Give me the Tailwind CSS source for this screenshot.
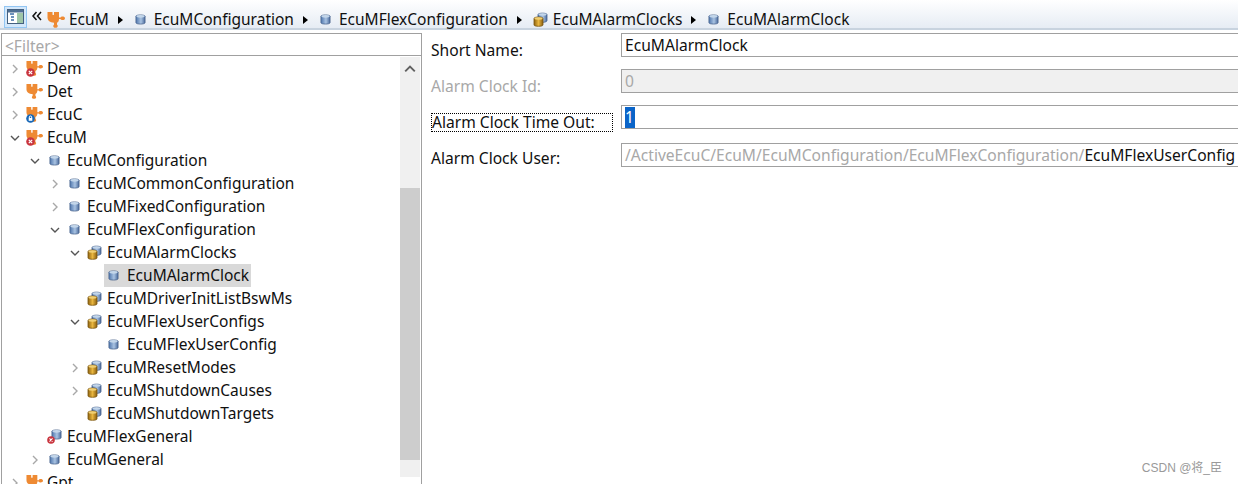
<!DOCTYPE html>
<html lang="en">
<head>
<meta charset="UTF-8">
<title>EcuMAlarmClock</title>
<script src="https://cdn.jsdelivr.net/npm/@tailwindcss/browser@4"></script>
</head>
<body class="bg-white">
<svg class="absolute w-0 h-0">
  <defs>
    <linearGradient id="blue" x1="0" y1="0" x2="1" y2="0"><stop offset="0" stop-color="#4f76ad"/><stop offset=".55" stop-color="#a9c3e2"/><stop offset="1" stop-color="#4a6a9c"/></linearGradient>
    <linearGradient id="gold" x1="0" y1="0" x2="1" y2="0"><stop offset="0" stop-color="#8f6410"/><stop offset=".5" stop-color="#e9b63f"/><stop offset="1" stop-color="#8a5f10"/></linearGradient>
  </defs>
  <symbol id="plugin" viewBox="0 0 18 18">
    <path d="M.5 1h5v2.500c0 .8 1.500 .8 1.500 0V1h5v5.500h1.500c.4-1.600 4.500-1.600 4.500.7s-4.100 2.300-4.500.7H12c0 2-.8 3.300-2 3.800v2c1.300.8 1 3-1.500 3s-2.800-2.200-1.500-3v-2C3 11.500.5 9.500.5 6.500z" fill="#ee8a33"/>
  </symbol>
  <symbol id="cyl" viewBox="0 0 12 12">
    <path d="M1 2.500C1 .5 11 .5 11 2.500v7c0 2-10 2-10 0z" fill="url(#blue)" stroke="#47618a" stroke-width=".8"/>
    <ellipse cx="6" cy="2.500" rx="4.500" ry="1.500" fill="#c3d6ea"/>
  </symbol>
  <symbol id="stack" viewBox="0 0 15 15">
    <path d="M5 2.500C5 .7 14 .7 14 2.500v6c0 1.500-3 1.800-4 1.800H5z" fill="url(#blue)" stroke="#47618a" stroke-width=".8"/>
    <ellipse cx="9.500" cy="2.500" rx="4" ry="1.200" fill="#c3d6ea"/>
    <path d="M1 6.500C1 4.500 10 4.500 10 6.500v6.500c0 1.700-9 1.700-9 0z" fill="url(#gold)" stroke="#7a5510" stroke-width=".8"/>
    <ellipse cx="5.500" cy="6.500" rx="4" ry="1.200" fill="#f0cf73"/>
  </symbol>
  <symbol id="err" viewBox="0 0 9 9">
    <circle cx="4.500" cy="4.500" r="4.300" fill="#c9353f"/>
    <path d="M2.800 2.800l3.400 3.400M6.200 2.800L2.800 6.200" stroke="#fff" stroke-width="1.200"/>
  </symbol>
  <symbol id="info" viewBox="0 0 9 9">
    <circle cx="4.500" cy="4.500" r="4.300" fill="#1667b7"/>
    <rect x="2.700" y="4" width="3.600" height="2.800" fill="#fff"/>
    <path d="M3.300 4V3c0-1.300 2.400-1.300 2.400 0v1" fill="none" stroke="#fff"/>
  </symbol>
  <symbol id="open" viewBox="0 0 10 10"><path d="M1 3l4 4 4-4" fill="none" stroke="#555" stroke-width="1.400"/></symbol>
  <symbol id="closed" viewBox="0 0 10 10"><path d="M3 1l4 4-4 4" fill="none" stroke="#a8a8a8" stroke-width="1.400"/></symbol>
</svg>

<div class="relative w-[1238px] h-[484px] overflow-hidden text-[15.5px] text-[#101010] font-['Noto_Sans','Open_Sans',sans-serif]">
  <!-- breadcrumb -->
  <div class="h-[30px] pt-[11px] flex items-center bg-gradient-to-b from-white to-[#e6ecf4] border-b-2 border-[#c8d3df]">
    <div class="ml-1 mt-[-6px] w-[23px] h-[22px] flex items-center justify-center bg-[#d3e7fa] border border-[#93c6f3]">
      <svg width="17" height="15" viewBox="0 0 17 15"><rect x=".5" y=".5" width="16" height="14" fill="#fff" stroke="#44607f"/><rect x="1" y="1" width="15" height="2.500" fill="#4f6f94"/><rect x="10" y="4" width="6" height="10" fill="#9fc6a8"/><path d="M3 5h4M4 8h3M4 11h3" stroke="#3e6ea8" stroke-width="1.500"/></svg>
    </div>
    <svg class="ml-[5px] mt-[-7px]" width="10" height="10" viewBox="0 0 10 10"><path d="M4.500 1L1 5l3.500 4M9 1L5.500 5 9 9" fill="none" stroke="#111" stroke-width="1.500"/></svg>
    <svg class="ml-[5px]" width="18" height="18"><use href="#plugin"/></svg>
    <span class="ml-[4px]">EcuM</span>
    <span class="ml-[9px] w-0 h-0 border-y-[4px] border-y-transparent border-l-[5px] border-l-black"></span>
    <svg class="ml-[12px]" width="11" height="11"><use href="#cyl"/></svg>
    <span class="ml-[8px]">EcuMConfiguration</span>
    <span class="ml-[9px] w-0 h-0 border-y-[4px] border-y-transparent border-l-[5px] border-l-black"></span>
    <svg class="ml-[12px]" width="11" height="11"><use href="#cyl"/></svg>
    <span class="ml-[8px]">EcuMFlexConfiguration</span>
    <span class="ml-[9px] w-0 h-0 border-y-[4px] border-y-transparent border-l-[5px] border-l-black"></span>
    <svg class="ml-[11px]" width="15" height="15"><use href="#stack"/></svg>
    <span class="ml-[5px]">EcuMAlarmClocks</span>
    <span class="ml-[9px] w-0 h-0 border-y-[4px] border-y-transparent border-l-[5px] border-l-black"></span>
    <svg class="ml-[12px]" width="11" height="11"><use href="#cyl"/></svg>
    <span class="ml-[8px]">EcuMAlarmClock</span>
  </div>

  <div class="flex pt-[3px]">
    <!-- tree panel -->
    <div class="ml-px w-[421px] h-[460px] shrink-0 border-l border-r border-t border-[#a0a0a0] overflow-hidden">
      <div class="h-[22px] pt-[4px] flex items-center border-b border-[#a0a0a0] pl-[3px] text-[#a8a8a8]">&lt;Filter&gt;</div>
      <div class="relative">
        <!-- scrollbar -->
        <div class="absolute right-px top-px w-5 h-[420px] bg-[#f0f0f0]">
          <svg class="mx-auto mt-[7px]" width="12" height="10" viewBox="0 0 10 8"><path d="M1 6l4-4 4 4" fill="none" stroke="#606060" stroke-width="1.600"/></svg>
          <div class="absolute left-0 top-[131px] w-5 h-[272px] bg-[#cdcdcd]"></div>
        </div>
        <div class="flex flex-col pt-px">
          <div class="h-[23px] flex items-center pl-[8px]"><svg width="10" height="10"><use href="#closed"/></svg><span class="relative ml-[6px] mr-[4px] w-[17px] h-[17px]"><svg width="17" height="17"><use href="#plugin"/></svg><svg class="absolute left-0 bottom-0" width="9" height="9"><use href="#err"/></svg></span>Dem</div>
          <div class="h-[23px] flex items-center pl-[8px]"><svg width="10" height="10"><use href="#closed"/></svg><span class="ml-[6px] mr-[4px] w-[17px] h-[17px]"><svg width="17" height="17"><use href="#plugin"/></svg></span>Det</div>
          <div class="h-[23px] flex items-center pl-[8px]"><svg width="10" height="10"><use href="#closed"/></svg><span class="relative ml-[6px] mr-[4px] w-[17px] h-[17px]"><svg width="17" height="17"><use href="#plugin"/></svg><svg class="absolute left-0 bottom-0" width="9" height="9"><use href="#info"/></svg></span>EcuC</div>
          <div class="h-[23px] flex items-center pl-[8px]"><svg width="10" height="10"><use href="#open"/></svg><span class="relative ml-[6px] mr-[4px] w-[17px] h-[17px]"><svg width="17" height="17"><use href="#plugin"/></svg><svg class="absolute left-0 bottom-0" width="9" height="9"><use href="#err"/></svg></span>EcuM</div>
          <div class="h-[23px] flex items-center pl-[28px]"><svg width="10" height="10"><use href="#open"/></svg><svg class="ml-[9px] mr-[7px]" width="11" height="11"><use href="#cyl"/></svg>EcuMConfiguration</div>
          <div class="h-[23px] flex items-center pl-[48px]"><svg width="10" height="10"><use href="#closed"/></svg><svg class="ml-[9px] mr-[7px]" width="11" height="11"><use href="#cyl"/></svg>EcuMCommonConfiguration</div>
          <div class="h-[23px] flex items-center pl-[48px]"><svg width="10" height="10"><use href="#closed"/></svg><svg class="ml-[9px] mr-[7px]" width="11" height="11"><use href="#cyl"/></svg>EcuMFixedConfiguration</div>
          <div class="h-[23px] flex items-center pl-[48px]"><svg width="10" height="10"><use href="#open"/></svg><svg class="ml-[9px] mr-[7px]" width="11" height="11"><use href="#cyl"/></svg>EcuMFlexConfiguration</div>
          <div class="h-[23px] flex items-center pl-[68px]"><svg width="10" height="10"><use href="#open"/></svg><svg class="ml-[7px] mr-[5px]" width="15" height="15"><use href="#stack"/></svg>EcuMAlarmClocks</div>
          <div class="h-[23px] flex items-center ml-[102px] w-[147px] bg-[#d9d9d9] pl-1"><svg class="mr-[8px]" width="11" height="11"><use href="#cyl"/></svg>EcuMAlarmClock</div>
          <div class="h-[23px] flex items-center pl-[85px]"><svg class="mr-[5px]" width="15" height="15"><use href="#stack"/></svg>EcuMDriverInitListBswMs</div>
          <div class="h-[23px] flex items-center pl-[68px]"><svg width="10" height="10"><use href="#open"/></svg><svg class="ml-[7px] mr-[5px]" width="15" height="15"><use href="#stack"/></svg>EcuMFlexUserConfigs</div>
          <div class="h-[23px] flex items-center pl-[106px]"><svg class="mr-[8px]" width="11" height="11"><use href="#cyl"/></svg>EcuMFlexUserConfig</div>
          <div class="h-[23px] flex items-center pl-[68px]"><svg width="10" height="10"><use href="#closed"/></svg><svg class="ml-[7px] mr-[5px]" width="15" height="15"><use href="#stack"/></svg>EcuMResetModes</div>
          <div class="h-[23px] flex items-center pl-[68px]"><svg width="10" height="10"><use href="#closed"/></svg><svg class="ml-[7px] mr-[5px]" width="15" height="15"><use href="#stack"/></svg>EcuMShutdownCauses</div>
          <div class="h-[23px] flex items-center pl-[85px]"><svg class="mr-[5px]" width="15" height="15"><use href="#stack"/></svg>EcuMShutdownTargets</div>
          <div class="h-[23px] flex items-center pl-[45px]"><span class="relative mr-[5px] w-[15px] h-[15px]"><svg class="absolute right-0 top-0" width="11" height="11"><use href="#cyl"/></svg><svg class="absolute left-0 bottom-0" width="8" height="8"><use href="#err"/></svg></span>EcuMFlexGeneral</div>
          <div class="h-[23px] flex items-center pl-[28px]"><svg width="10" height="10"><use href="#closed"/></svg><svg class="ml-[9px] mr-[7px]" width="11" height="11"><use href="#cyl"/></svg>EcuMGeneral</div>
          <div class="h-[23px] flex items-center pl-[8px]"><svg width="10" height="10"><use href="#closed"/></svg><span class="ml-[6px] mr-[4px] w-[17px] h-[17px]"><svg width="17" height="17"><use href="#plugin"/></svg></span>Gpt</div>
        </div>
      </div>
    </div>

    <!-- form -->
    <div class="flex-1 min-w-0 pl-[9px] flex flex-col text-[15.6px]">
      <div class="flex h-[36px]">
        <label class="w-[190px] pt-[6px]">Short Name:</label>
        <div class="flex-1 h-[24px] pt-[2px] border border-r-0 border-[#a0a0a0] pl-[3px] flex items-center">EcuMAlarmClock</div>
      </div>
      <div class="flex h-[36px]">
        <label class="w-[190px] pt-[6px] text-[#a8a8a8]">Alarm Clock Id:</label>
        <div class="flex-1 h-[24px] pt-[2px] border border-r-0 border-[#a0a0a0] bg-[#f0f0f0] pl-[3px] flex items-center text-[#a8a8a8]">0</div>
      </div>
      <div class="flex h-[38px]">
        <div class="w-[190px] pt-[8px]"><label class="block w-[182px] h-[19px] leading-[17px] border border-dotted border-black">Alarm Clock Time Out:</label></div>
        <div class="flex-1 h-[24px] border border-r-0 border-[#a0a0a0] pl-[3px] flex items-center"><span class="bg-[#0a64c8] text-white w-[10px] h-[21px] leading-[21px]">1</span></div>
      </div>
      <div class="flex h-[36px]">
        <label class="w-[190px] pt-[4px]">Alarm Clock User:</label>
        <div class="flex-1 h-[24px] pt-[2px] border border-r-0 border-[#a0a0a0] pl-[3px] flex items-center whitespace-nowrap overflow-hidden text-[#a8a8a8]">/ActiveEcuC/EcuM/EcuMConfiguration/EcuMFlexConfiguration/<span class="text-[#101010]">EcuMFlexUserConfig</span></div>
      </div>
    </div>
  </div>

  <div class="absolute right-[16px] bottom-[7px] text-[12px] text-[#9a9a9a] font-['Liberation_Sans','Noto_Sans_CJK_SC',sans-serif]">CSDN @将_臣</div>
</div>
</body>
</html>
